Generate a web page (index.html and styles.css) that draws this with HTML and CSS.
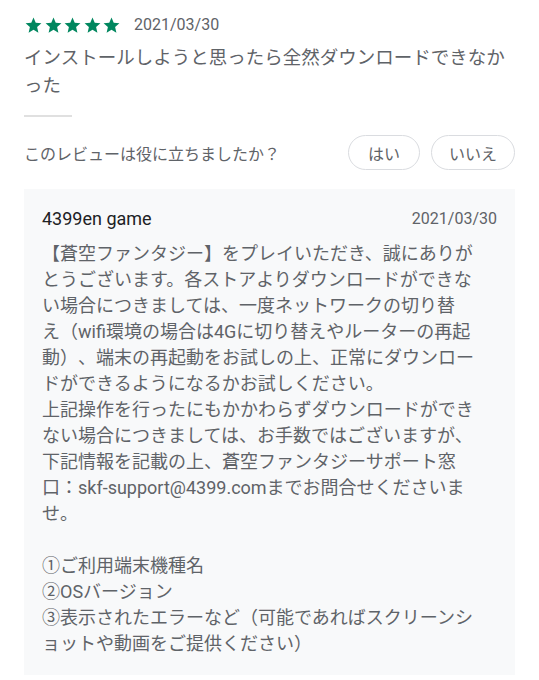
FILE: index.html
```html
<!DOCTYPE html>
<html lang="ja">

<head>
    <meta charset="UTF-8">
    <meta name="viewport" content="width=device-width, initial-scale=1.0">
    <title>レビュー</title>
    <link rel="stylesheet" href="styles.css">
</head>

<body>

    <div class="review">
        <div class="review-meta">
            <div class="stars">
                <svg class="star" viewBox="0 0 24 24"><path d="M12 17.27L18.18 21l-1.64-7.03L22 9.24l-7.19-.61L12 2 9.19 8.63 2 9.24l5.46 4.73L5.82 21z"/></svg>
                <svg class="star" viewBox="0 0 24 24"><path d="M12 17.27L18.18 21l-1.64-7.03L22 9.24l-7.19-.61L12 2 9.19 8.63 2 9.24l5.46 4.73L5.82 21z"/></svg>
                <svg class="star" viewBox="0 0 24 24"><path d="M12 17.27L18.18 21l-1.64-7.03L22 9.24l-7.19-.61L12 2 9.19 8.63 2 9.24l5.46 4.73L5.82 21z"/></svg>
                <svg class="star" viewBox="0 0 24 24"><path d="M12 17.27L18.18 21l-1.64-7.03L22 9.24l-7.19-.61L12 2 9.19 8.63 2 9.24l5.46 4.73L5.82 21z"/></svg>
                <svg class="star" viewBox="0 0 24 24"><path d="M12 17.27L18.18 21l-1.64-7.03L22 9.24l-7.19-.61L12 2 9.19 8.63 2 9.24l5.46 4.73L5.82 21z"/></svg>
            </div>
            <span class="review-date">2021/03/30</span>
        </div>

        <p class="review-text">インストールしようと思ったら全然ダウンロードできなかった</p>

        <div class="divider"></div>

        <div class="helpful">
            <span class="helpful-label">このレビューは役に立ちましたか？</span>
            <div class="helpful-buttons">
                <button class="pill">はい</button>
                <button class="pill">いいえ</button>
            </div>
        </div>

        <div class="reply">
            <div class="reply-head">
                <span class="reply-name">4399en game</span>
                <span class="reply-date">2021/03/30</span>
            </div>
            <p class="reply-text">【蒼空ファンタジー】をプレイいただき、誠にありが<br>とうございます。各ストアよりダウンロードができな<br>い場合につきましては、一度ネットワークの切り替<br>え（wifi環境の場合は4Gに切り替えやルーターの再起<br>動）、端末の再起動をお試しの上、正常にダウンロー<br>ドができるようになるかお試しください。<br>上記操作を行ったにもかかわらずダウンロードができ<br>ない場合につきましては、お手数ではございますが、<br>下記情報を記載の上、蒼空ファンタジーサポート窓<br>口：skf-support@4399.comまでお問合せくださいま<br>せ。<br><br>①ご利用端末機種名<br>②OSバージョン<br>③表示されたエラーなど（可能であればスクリーンシ<br>ョットや動画をご提供ください）</p>
        </div>
    </div>

</body>

</html>
```

FILE: styles.css
```css
body {
    margin: 0;
    padding: 15px 24px 0;
    background-color: #ffffff;
    font-family: Roboto, "Noto Sans CJK JP", sans-serif;
    color: #5f6368;
    text-spacing-trim: space-all;
}

.review-meta {
    display: flex;
    align-items: center;
    height: 20px;
}

.stars {
    display: flex;
    gap: 0.5px;
}

.star {
    width: 19px;
    height: 19px;
    fill: #01875f;
}

.review-date {
    margin-left: 13px;
    font-size: 16px;
    line-height: 20px;
}

.review-text {
    margin: 9px 0 0;
    font-size: 18.5px;
    line-height: 28px;
}

.divider {
    width: 48px;
    height: 2px;
    margin-top: 15px;
    background-color: #e0e0e0;
}

.helpful {
    display: flex;
    justify-content: space-between;
    align-items: center;
    margin-top: 18px;
}

.helpful-label {
    font-size: 16px;
}

.helpful-buttons {
    display: flex;
    gap: 11px;
}

.pill {
    height: 35px;
    min-width: 72px;
    padding: 0 17px;
    border: 1px solid #dadce0;
    border-radius: 18px;
    background-color: #ffffff;
    font-family: inherit;
    font-size: 16px;
    color: #5f6368;
}

.reply {
    margin-top: 19px;
    padding: 19px 18px 18px;
    background-color: #f8f9fa;
}

.reply-head {
    display: flex;
    justify-content: space-between;
    align-items: center;
    line-height: 22px;
}

.reply-name {
    font-size: 18px;
    color: #202124;
}

.reply-date {
    font-size: 16px;
}

.reply-text {
    margin: 11px 0 0;
    font-size: 18px;
    line-height: 26px;
}
```
